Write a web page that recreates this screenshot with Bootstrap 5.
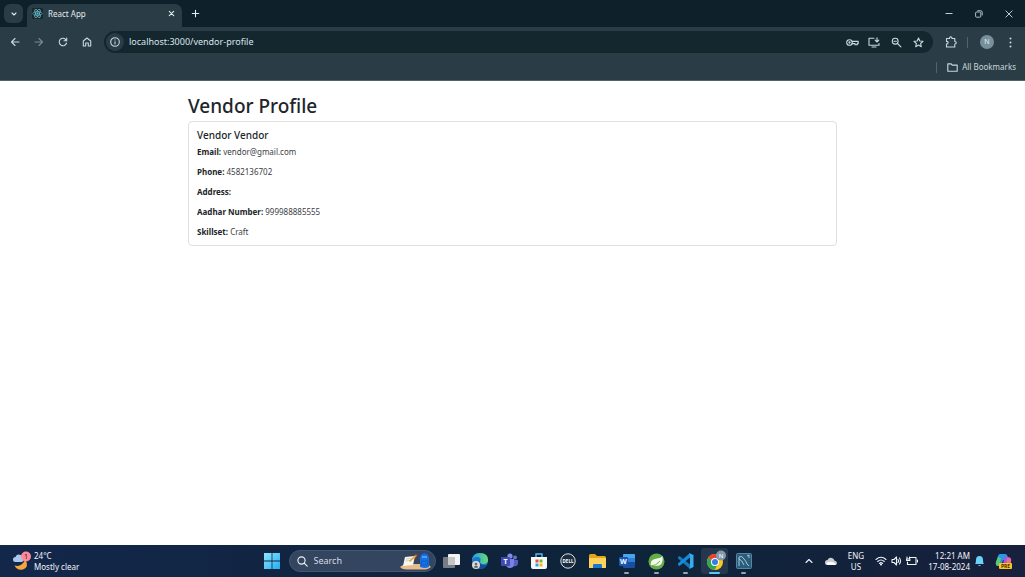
<!DOCTYPE html>
<html lang="en">
<head>
<meta charset="utf-8">
<meta name="viewport" content="width=device-width, initial-scale=1">
<title>React App</title>
<link href="https://cdn.jsdelivr.net/npm/bootstrap@5.3.0/dist/css/bootstrap.min.css" rel="stylesheet">
<style>
  body { font-family: "Noto Sans", "Open Sans", sans-serif; font-size: 8px; line-height: 12px; }
  button, input { font: inherit; color: inherit; }
  svg { display: block; flex: none; }
  .plain { background: none; border: 0; padding: 0; display: flex; align-items: center; justify-content: center; flex: none; }
  .stroke { fill: none; stroke: currentColor; stroke-width: 1.1; stroke-linecap: round; stroke-linejoin: round; }

  /* browser chrome */
  .tabstrip { background: #0e212b; color: #e3ebee; height: 27px; }
  .tab-search { width: 19px; height: 19px; margin: 4px 4px 0; border-radius: 6px; background: #2a3c45; }
  .tab-active { width: 155px; margin-top: 4px; padding: 0 6px 4px 5px; border-radius: 7px 7px 0 0; background: #2a3c45; }
  .tab-label { margin-left: 5px; }
  .new-tab { width: 26px; }
  .win { width: 30px; color: #c3ced3; }
  .win-group { margin-right: 1px; }
  .chrome { background: #2a3c45; color: #c9d8de; border-bottom: 1px solid #526269; height: 54px; }
  .toolbar { padding: 3px 3px 0; }
  .nav-btn { width: 24px; height: 24px; }
  .omnibox { background: #14272f; height: 22px; border-radius: 11px; margin: 0 6px 0 5px; }
  .site-info { width: 18px; height: 18px; border-radius: 9px; background: #2a3c45; margin-left: 2px; }
  .address { background: none; border: 0; outline: 0; padding: 0; margin-left: 5px; font-size: 9px; color: #dbe5e9; min-width: 0; }
  .omni-btn { width: 22px; height: 20px; }
  .divider { width: 1px; height: 11px; background: #50646d; }
  .avatar { width: 14px; height: 14px; border-radius: 7px; background: #78909c; color: #e8eff2; font-size: 7px; }
  .bookmarks { height: 26px; padding-right: 9px; }
  .folder { margin: 0 4px 0 10px; }

  /* page */
  .profile { max-width: 649px; padding: 12px 0 0; }
  .profile h1 { font-size: 19px; line-height: 26px; margin: 0 0 2px; font-weight: 500; color: #212529; }
  .vendor-card { border-radius: 4px; border-color: #dfdfdf; }
  .vendor-card .card-body { padding: 7px 8px; font-size: 8px; line-height: 12px; color: #3b4045; }
  .vendor-card .card-title { font-size: 10px; line-height: 13px; margin: 0 0 4px; font-weight: 500; color: #212529; }
  .vendor-card p { margin: 0 0 8px; }
  .vendor-card strong { color: #212529; }

  /* taskbar */
  .taskbar { display: grid; grid-template-columns: 1fr auto 1fr; height: 32px; background: linear-gradient(90deg, #13274b, #10233c 45%, #0d243a 60%, #17203c); color: #f2f5f9; }
  .weather { margin-left: 13px; line-height: 11px; gap: 3px; text-align: left; }
  .dock { padding-right: 9px; }
  .slot { width: 29px; height: 32px; position: relative; }
  .running::after { content: ""; position: absolute; bottom: 3px; left: 12px; width: 5px; height: 2px; border-radius: 1px; background: #9aa3b0; }
  .current::before { content: ""; position: absolute; inset: 3px 1px 3px; border-radius: 3px; background: #24374d; }
  .current::after { left: 9px; width: 11px; background: #5cc4f2; }
  .current svg { position: relative; }
  .searchbox { width: 147px; height: 22px; border-radius: 11px; background: #344560; border: 1px solid #46566e; margin: 0 1px 0 2px; padding: 0 4px 0 7px; }
  .searchbox input { background: none; border: 0; outline: 0; padding: 0; margin-left: 6px; width: 80px; font-size: 9px; }
  .searchbox input::placeholder { color: #d5dbe4; opacity: 1; }
  .apps { width: 322px; }
  .tray { padding-right: 13px; }
  .tray .plain { height: 32px; }
  .weather, .tray .lang, .tray .clock { padding-bottom: 1px; }
  .lang { width: 30px; line-height: 11px; }
  .clock { line-height: 11px; width: 48px; }
  .copilot { margin-left: 10px; }
</style>
</head>
<body class="d-flex flex-column min-vh-100 bg-white">

<header>
  <div class="tabstrip d-flex">
    <button class="plain tab-search" aria-label="Search tabs"><svg width="8" height="8" viewBox="0 0 8 8" class="stroke"><path d="M2 3l2 2 2-2"/></svg></button>
    <div class="tab-active d-flex align-items-center">
      <svg width="11" height="11" viewBox="0 0 20 20"><rect width="20" height="20" rx="2" fill="#20252b"/><g fill="none" stroke="#5cc5d9" stroke-width="1.3"><ellipse cx="10" cy="10" rx="8.5" ry="3.3"/><ellipse cx="10" cy="10" rx="8.5" ry="3.3" transform="rotate(60 10 10)"/><ellipse cx="10" cy="10" rx="8.5" ry="3.3" transform="rotate(120 10 10)"/></g><circle cx="10" cy="10" r="1.8" fill="#5cc5d9"/></svg>
      <span class="tab-label flex-grow-1">React App</span>
      <button class="plain" aria-label="Close tab"><svg width="9" height="9" viewBox="0 0 9 9" class="stroke"><path d="M2.300 2.300l4.400 4.400M6.700 2.300L2.300 6.700"/></svg></button>
    </div>
    <button class="plain new-tab" aria-label="New tab"><svg width="9" height="9" viewBox="0 0 9 9" class="stroke"><path d="M4.500 1.300v6.400M1.300 4.500h6.400"/></svg></button>
    <div class="win-group d-flex ms-auto">
      <button class="plain win" aria-label="Minimize"><svg width="8" height="8" viewBox="0 0 8 8"><path d="M.5 3.500h7" stroke="currentColor" stroke-width="1"/></svg></button>
      <button class="plain win" aria-label="Restore"><svg width="8" height="8" viewBox="0 0 8 8" fill="none" stroke="currentColor" stroke-width=".9"><rect x=".6" y="2" width="5.200" height="5.200" rx="1"/><path d="M2.400.7h3.300q1.500 0 1.500 1.500v3.200"/></svg></button>
      <button class="plain win" aria-label="Close"><svg width="8" height="8" viewBox="0 0 8 8" fill="none" stroke="currentColor"><path d="M.6.6l6.800 6.800M7.400.6L.6 7.400"/></svg></button>
    </div>
  </div>

  <div class="chrome">
    <div class="toolbar d-flex align-items-center">
      <div class="d-flex">
        <button class="plain nav-btn" aria-label="Back"><svg width="10" height="10" viewBox="0 0 10 10" class="stroke"><path d="M9 5H1.500M5 1.500L1.500 5 5 8.500"/></svg></button>
        <button class="plain nav-btn opacity-50" aria-label="Forward"><svg width="10" height="10" viewBox="0 0 10 10" class="stroke"><path d="M1 5h7.500M5 1.500L8.500 5 5 8.500"/></svg></button>
        <button class="plain nav-btn" aria-label="Reload"><svg width="10" height="10" viewBox="0 0 10 10" class="stroke"><path d="M8.500 6A3.700 3.700 0 1 1 8 2.900M8.700 1v2.700H6"/></svg></button>
        <button class="plain nav-btn" aria-label="Home"><svg width="10" height="10" viewBox="0 0 10 10" class="stroke"><path d="M1.300 4L5 1l3.700 3v5H6.300V6H3.700v3H1.300z"/></svg></button>
      </div>
      <div class="omnibox d-flex align-items-center flex-grow-1">
        <button class="plain site-info" aria-label="Site information"><svg width="10" height="10" viewBox="0 0 10 10" class="stroke"><circle cx="5" cy="5" r="4.300"/><path d="M5 4.700v2.200M5 2.900v.1"/></svg></button>
        <input class="address flex-grow-1" type="text" aria-label="Address" value="localhost:3000/vendor-profile">
        <button class="plain omni-btn" aria-label="Passwords"><svg width="13" height="9" viewBox="0 0 13 9" class="stroke"><circle cx="3.500" cy="4.500" r="2.800"/><circle cx="3.500" cy="4.500" r=".6"/><path d="M6 3.400h6.200v2.200h-1v1.200H9V5.600H6"/></svg></button>
        <button class="plain omni-btn" aria-label="Install app"><svg width="12" height="11" viewBox="0 0 12 11" class="stroke"><path d="M6 1.200H1v7h10V6.500M4 10h4M9 .8v4M7.200 3.200L9 5l1.800-1.800"/></svg></button>
        <button class="plain omni-btn" aria-label="Zoom"><svg width="11" height="11" viewBox="0 0 11 11" class="stroke"><circle cx="4.200" cy="4.200" r="2.900"/><path d="M6.500 6.500l3.400 3.400M3 4.200h2.400"/></svg></button>
        <button class="plain omni-btn me-1" aria-label="Bookmark"><svg width="11" height="11" viewBox="0 0 11 11" class="stroke"><path d="M5.500 1l1.300 3 3.200.3-2.400 2.200.7 3.200-2.800-1.700-2.800 1.700.7-3.200L1 4.300 4.200 4z"/></svg></button>
      </div>
      <button class="plain nav-btn" aria-label="Extensions"><svg width="12" height="12" viewBox="0 0 12 12" class="stroke"><path d="M1.500 2.500h3q0-1.600 1.300-1.600T7 2.500h2.800v3q1.500 0 1.500 1.200T9.800 8v3H1.500V8q1.600 0 1.600-1.300T1.500 5.400z"/></svg></button>
      <span class="divider ms-1 me-2"></span>
      <button class="plain avatar ms-1" aria-label="Profile N">N</button>
      <button class="plain nav-btn ms-1" aria-label="Menu"><svg width="3" height="11" viewBox="0 0 3 11" fill="currentColor"><circle cx="1.500" cy="1.500" r="1"/><circle cx="1.500" cy="5.500" r="1"/><circle cx="1.500" cy="9.500" r="1"/></svg></button>
    </div>
    <div class="bookmarks d-flex justify-content-end align-items-center">
      <span class="divider"></span>
      <button class="plain"><svg class="stroke folder" width="11" height="9" viewBox="0 0 11 9"><path d="M.8.900h3.400l1 1.200h5v6.200H.8z"/></svg>All Bookmarks</button>
    </div>
  </div>
</header>

<main class="flex-grow-1">
  <div class="container profile">
    <h1>Vendor Profile</h1>
    <div class="card vendor-card">
      <div class="card-body">
        <h5 class="card-title">Vendor Vendor</h5>
        <p><strong>Email:</strong> vendor@gmail.com</p>
        <p><strong>Phone:</strong> 4582136702</p>
        <p><strong>Address:</strong></p>
        <p><strong>Aadhar Number:</strong> 999988885555</p>
        <p class="mb-0"><strong>Skillset:</strong> Craft</p>
      </div>
    </div>
  </div>
</main>

<footer class="taskbar">
  <button class="plain weather justify-content-start">
    <svg width="18" height="20" viewBox="0 0 18 20"><path d="M12.500 8.500q4 8-2.500 10-5.500 1.500-8.500-4 7 2 11-6z" fill="#f6a63a"/><path d="M2.500 11a2.500 2.500 0 0 1 0-5Q4 2.500 7.500 4q3 0 3.500 3.500 0 3.500-3 3.500z" fill="#a9c9f1"/><circle cx="13" cy="5.500" r="5" fill="#ff8b98"/><text x="13" y="8" text-anchor="middle" font-size="7" fill="#30151c">1</text></svg>
    <span>24°C<br>Mostly clear</span>
  </button>

  <div class="dock d-flex align-items-center">
    <button class="plain slot" aria-label="Start"><svg width="16" height="16" viewBox="0 0 16 16"><defs><linearGradient id="win" x2="1" y2="1"><stop stop-color="#8ee4ff"/><stop offset="1" stop-color="#22aef2"/></linearGradient></defs><path fill="url(#win)" d="M0 0h7.600v7.600H0zM8.400 0H16v7.600H8.400zM0 8.400h7.600V16H0zM8.400 8.400H16V16H8.400z"/></svg></button>
    <label class="searchbox d-flex align-items-center">
      <svg class="stroke" width="11" height="11" viewBox="0 0 11 11"><circle cx="4.500" cy="4.500" r="3.600"/><path d="M7.200 7.200l3 3"/></svg>
      <input type="text" placeholder="Search" aria-label="Search">
      <svg class="ms-auto" width="31" height="18" viewBox="0 0 31 18"><path d="M0 15q3-3 9-3h13q7 0 9 3-3 3-10 2.500H7Q2 17.500 0 15z" fill="#e8bd8b"/><path d="M5 5l10-1-2 9-10 1z" fill="#f7f7f2"/><path d="M6 7l6-.7M5.500 9l5-.6" stroke="#a9c49b" stroke-width=".6"/><path d="M9 9l6-6 1.500 1.500L10 10z" fill="#f0a23b"/><path d="M15 3l1-1 1.500 1.500-1 1z" fill="#df3e43"/><path d="M21 3q3.500-4 7 0l1 3v9q-4 2-9 0V6z" fill="#176fe0"/><path d="M23 3q0-2 1.500-2T26 3M21.500 9h6v4h-6z" fill="none" stroke="#0a58c0" stroke-width=".7"/><path d="M22 4h5v2h-5z" fill="#4aa2ff"/></svg>
    </label>
    <div class="apps d-flex justify-content-between">
      <button class="plain slot" aria-label="Task view"><svg width="17" height="16" viewBox="0 0 17 16"><rect y="4" width="12" height="11" rx="1" fill="#777d83"/><rect x="5" y="1" width="12" height="11" rx="1" fill="#f4f4f4"/><path d="M5 4h7v8H5z" fill="#c4c6c8"/></svg></button>
      <button class="plain slot" aria-label="Edge"><svg width="18" height="18" viewBox="0 0 18 18"><defs><linearGradient id="edge" x2="1"><stop stop-color="#269be7"/><stop offset="1" stop-color="#68df72"/></linearGradient></defs><circle cx="9" cy="9" r="8" fill="#1479cf"/><path d="M1 9Q1 1 9 1q8 0 8 7 0 4-5 4-3 0-3-2 2-5-3-5-4 0-5 4z" fill="url(#edge)"/><path d="M9 8q-1 4 3 5 2 .5 4-.5-2 4-7 4.500-3-4 0-9z" fill="#174a94"/><circle cx="5" cy="13" r="4" fill="#d9d8d6"/><circle cx="5" cy="12" r="1.300" fill="#67655f"/><path d="M2.700 15q2.300-3 4.600 0-2.300 2-4.600 0z" fill="#67655f"/></svg></button>
      <button class="plain slot" aria-label="Teams"><svg width="17" height="16" viewBox="0 0 17 16"><circle cx="14" cy="4.500" r="2" fill="#6370ce"/><path d="M11 7h6v4q-1 3-5 2z" fill="#5360c1"/><circle cx="9" cy="3" r="2.600" fill="#818ceb"/><path d="M5 6h8v5q0 4-4 4t-4-4z" fill="#7882e2"/><rect y="4" width="9" height="9" rx="1" fill="#434ab3"/><text x="4.500" y="11" text-anchor="middle" font-size="7" font-weight="700" fill="#fff">T</text></svg></button>
      <button class="plain slot" aria-label="Microsoft Store"><svg width="16" height="17" viewBox="0 0 16 17"><path d="M5 4V1h6v3" fill="none" stroke="#55b9ee" stroke-width="1.400"/><path d="M0 4h16v10q0 2-2 2H2q-2 0-2-2z" fill="#f7f8fa"/><path d="M4.500 6.500h3v3h-3z" fill="#ee5032"/><path d="M8.500 6.500h3v3h-3z" fill="#7db928"/><path d="M4.500 10.500h3v3h-3z" fill="#2aa6e8"/><path d="M8.500 10.500h3v3h-3z" fill="#fbb71b"/></svg></button>
      <button class="plain slot" aria-label="Dell"><svg width="16" height="16" viewBox="0 0 16 16"><circle cx="8" cy="8" r="7.200" fill="#1b2d40" stroke="#e0e3e7"/><text x="8" y="9.600" text-anchor="middle" font-size="4.500" font-weight="700" fill="#fff">DELL</text></svg></button>
      <button class="plain slot" aria-label="File Explorer"><svg width="17" height="15" viewBox="0 0 17 15"><path d="M0 1.500Q0 0 1.500 0H6l2 2h7.500Q17 2 17 4v9q0 1-1 1H0z" fill="#e6a41a"/><path d="M0 4h17v9q0 1-1 1H1q-1 0-1-1z" fill="#ffd35b"/><path d="M4 14v-3q0-1 1-1h7q1 0 1 1v3z" fill="#1b78d2"/></svg></button>
      <button class="plain slot running" aria-label="Word"><svg width="16" height="16" viewBox="0 0 16 16"><rect x="4" y="1" width="12" height="14" rx="1" fill="#174e9f"/><path d="M4 2q0-1 1-1h10q1 0 1 1v3H4z" fill="#49a5ed"/><path d="M4 5h12v4H4z" fill="#2c80d6"/><rect y="4" width="9" height="9" rx="1" fill="#1857b4"/><text x="4.500" y="11" text-anchor="middle" font-size="7" font-weight="700" fill="#fff">W</text></svg></button>
      <button class="plain slot running" aria-label="Spring Tools"><svg width="17" height="17" viewBox="0 0 17 17"><circle cx="8.500" cy="8.500" r="8" fill="#64ad45"/><path d="M14.500 3Q16 13 8 13H4Q2 12 3 9q1-3 6-3.500Q13 5 14.500 3z" fill="#f4f9ed"/><path d="M3 13q5 0 9-5" fill="none" stroke="#64ad45"/></svg></button>
      <button class="plain slot running" aria-label="Visual Studio Code"><svg width="17" height="16" viewBox="0 0 17 16"><path d="M1 4l1.500-1L13 11.500V16L1 5.500z" fill="#1479bd"/><path d="M1 12l1.500 1L13 4.500V0L1 10.500z" fill="#168bd7"/><path d="M12 0l4.500 2v12L12 16l1-2V2z" fill="#34adf0"/></svg></button>
      <button class="plain slot running current" aria-label="Chrome"><svg width="22" height="22" viewBox="0 0 22 22"><circle cx="11" cy="12" r="8" fill="#fbc91d"/><path d="M11 12L4.100 8A8 8 0 0 1 17.900 8z" fill="#e64235"/><path d="M4.100 8A8 8 0 0 0 10.500 20L14 14l-3-2z" fill="#31a553"/><circle cx="11" cy="12" r="4" fill="#fff"/><circle cx="11" cy="12" r="3" fill="#347de8"/><circle cx="17" cy="5.500" r="5" fill="#829baa"/><text x="17" y="7.500" text-anchor="middle" font-size="6" fill="#fff">N</text></svg></button>
      <button class="plain slot running" aria-label="MySQL Workbench"><svg width="16" height="16" viewBox="0 0 16 16"><rect x=".5" y=".5" width="15" height="15" rx="1" fill="#285d7c" stroke="#58859e"/><path d="M3 13V4q3-2 5 2 2 2 3 5l2 2M3 6q3 1 5 6M11 3l2-1v3" fill="none" stroke="#d0e1eb" stroke-width=".8"/></svg></button>
    </div>
  </div>

  <div class="tray d-flex align-items-center justify-content-end">
    <button class="plain me-2 pe-1" aria-label="Show hidden icons"><svg width="8" height="8" viewBox="0 0 8 8" class="stroke"><path d="M1 5.500l3-3 3 3"/></svg></button>
    <button class="plain me-1" aria-label="OneDrive"><svg width="12" height="8" viewBox="0 0 12 8"><path d="M2.500 8a2.500 2.500 0 0 1 0-5Q4 0 7 1q2 .500 2.400 2.500Q12 4 12 6q0 2-2 2z" fill="#c9ced5"/><path d="M1 6.500Q5 3 11 7l-1 1H2.500z" fill="#fff"/></svg></button>
    <button class="plain lang">ENG<br>US</button>
    <button class="plain ms-1" aria-label="Network, sound and battery">
      <svg class="stroke" width="12" height="10" viewBox="0 0 12 10"><path d="M1 3.500Q6-1 11 3.500M2.700 5.500q3.300-3 6.600 0M4.400 7.300q1.600-1.400 3.200 0"/><circle cx="6" cy="8.500" r=".5"/></svg>
      <svg class="stroke mx-1" width="11" height="10" viewBox="0 0 11 10"><path d="M1 3.500h2L5.500 1v8L3 6.500H1zM7 3.500q1 1.500 0 3M8.500 2q2 3 0 6"/></svg>
      <svg class="stroke" width="12" height="10" viewBox="0 0 12 10"><path d="M4 1.500h6v7H1.500V6M11.500 4v2M1 1v2M3.500 1v2M.6 3h3.300v1.500H.6z"/></svg>
    </button>
    <button class="plain clock text-end justify-content-end ms-1"><span>12:21 AM<br>17-08-2024</span></button>
    <button class="plain ms-1" aria-label="Notifications"><svg width="11" height="12" viewBox="0 0 11 12" fill="#6bd1f5"><path d="M1 9q1-1 1-4 0-4 3.500-4T9 5q0 3 1 4zM4 10h3q-1.500 2-3 0z"/></svg></button>
    <button class="plain copilot" aria-label="Copilot preview"><svg width="17" height="17" viewBox="0 0 17 17"><path d="M5 1h5q2 0 2.500 2L14 7H8L6 13H3q-3 0-2-4l2-6q.5-2 2-2z" fill="#2799e6"/><path d="M1 9l2-5 3 1-2 8Q0 13 1 9z" fill="#58ca72"/><path d="M9 4h4q4 0 3 4l-2 5H8z" fill="#a955e6"/><path d="M12 5q5 0 4 4l-1 4h-4z" fill="#f06c8b"/><rect x="4" y="10" width="13" height="6" rx="1" fill="#ffc521"/><text x="10.500" y="15" text-anchor="middle" font-size="5" font-weight="700" fill="#423006">PRE</text></svg></button>
  </div>
</footer>

<script src="https://cdn.jsdelivr.net/npm/bootstrap@5.3.0/dist/js/bootstrap.bundle.min.js"></script>
</body>
</html>
